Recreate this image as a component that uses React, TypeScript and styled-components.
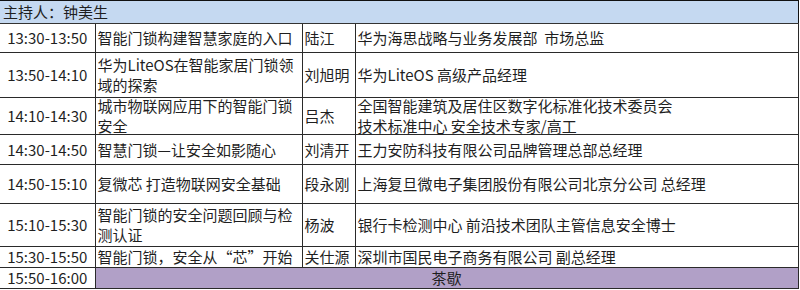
import React from "react";
import styled, { createGlobalStyle } from "styled-components";

interface Session {
  time: string;
  title: string[];
  speaker: string;
  org: string[];
  height: number;
}

const sessions: Session[] = [
  {
    time: "13:30-13:50",
    title: ["智能门锁构建智慧家庭的入口"],
    speaker: "陆江",
    org: ["华为海思战略与业务发展部  市场总监"],
    height: 29,
  },
  {
    time: "13:50-14:10",
    title: ["华为LiteOS在智能家居门锁领", "域的探索"],
    speaker: "刘旭明",
    org: ["华为LiteOS 高级产品经理"],
    height: 45,
  },
  {
    time: "14:10-14:30",
    title: ["城市物联网应用下的智能门锁", "安全"],
    speaker: "吕杰",
    org: ["全国智能建筑及居住区数字化标准化技术委员会", "技术标准中心 安全技术专家/高工"],
    height: 37,
  },
  {
    time: "14:30-14:50",
    title: ["智慧门锁—让安全如影随心"],
    speaker: "刘清开",
    org: ["王力安防科技有限公司品牌管理总部总经理"],
    height: 30,
  },
  {
    time: "14:50-15:10",
    title: ["复微芯 打造物联网安全基础"],
    speaker: "段永刚",
    org: ["上海复旦微电子集团股份有限公司北京分公司 总经理"],
    height: 39,
  },
  {
    time: "15:10-15:30",
    title: ["智能门锁的安全问题回顾与检", "测认证"],
    speaker: "杨波",
    org: ["银行卡检测中心 前沿技术团队主管信息安全博士"],
    height: 43,
  },
  {
    time: "15:30-15:50",
    title: ["智能门锁，安全从“芯”开始"],
    speaker: "关仕源",
    org: ["深圳市国民电子商务有限公司 副总经理"],
    height: 21,
  },
];

const GlobalStyle = createGlobalStyle`
  html, body {
    margin: 0;
    padding: 0;
    background: #ffffff;
  }
  body {
    font-family: "Noto Sans CJK SC", "Noto Sans", sans-serif;
    color: #1f1f1f;
  }
`;

const Table = styled.table`
  border-collapse: collapse;
  table-layout: fixed;
  width: 798px;
  font-size: 15px;
  line-height: 20px;
  border-top: 1px solid #111;
  border-right: 1px solid #111;
  border-bottom: 1px solid #111;
`;

const HostCell = styled.td`
  background: #c5d9f1;
  padding: 0;
  border-bottom: 1px solid #333;
`;

const Cell = styled.td<{ $first?: boolean }>`
  padding: 0;
  border: 1px solid #2a2a2a;
  border-left-width: ${(p) => (p.$first ? 0 : 1)}px;
`;

const BreakCell = styled.td`
  background: #b1a0c7;
  border: 1px solid #2a2a2a;
  padding: 0;
`;

// fixed-height box so two-line cells spill over the row like the sheet does
const Inner = styled.div<{ $h: number; $center?: boolean; $pad?: number }>`
  height: ${(p) => p.$h}px;
  padding: 0 ${(p) => p.$pad ?? 2}px;
  display: flex;
  flex-direction: column;
  justify-content: center;
  align-items: ${(p) => (p.$center ? "center" : "flex-start")};
  white-space: pre;
  overflow: visible;
`;

const Line = styled.div`
  line-height: 20px;
  height: 20px;
`;

export default function App() {
  return (
    <>
      <GlobalStyle />
      <Table>
        <colgroup>
          <col style={{ width: 95 }} />
          <col style={{ width: 207 }} />
          <col style={{ width: 53 }} />
          <col style={{ width: 443 }} />
        </colgroup>
        <tbody>
          <tr>
            <HostCell colSpan={4}>
              <Inner $h={22} $pad={3}>
                主持人：钟美生
              </Inner>
            </HostCell>
          </tr>
          {sessions.map((s) => (
            <tr key={s.time}>
              <Cell $first>
                <Inner $h={s.height - 1} $center>
                  {s.time}
                </Inner>
              </Cell>
              <Cell>
                <Inner $h={s.height - 1}>
                  {s.title.map((t) => (
                    <Line key={t}>{t}</Line>
                  ))}
                </Inner>
              </Cell>
              <Cell>
                <Inner $h={s.height - 1}>{s.speaker}</Inner>
              </Cell>
              <Cell>
                <Inner $h={s.height - 1}>
                  {s.org.map((t) => (
                    <Line key={t}>{t}</Line>
                  ))}
                </Inner>
              </Cell>
            </tr>
          ))}
          <tr>
            <Cell $first>
              <Inner $h={20} $center>
                15:50-16:00
              </Inner>
            </Cell>
            <BreakCell colSpan={3}>
              <Inner $h={20} $center>
                茶歇
              </Inner>
            </BreakCell>
          </tr>
        </tbody>
      </Table>
    </>
  );
}
